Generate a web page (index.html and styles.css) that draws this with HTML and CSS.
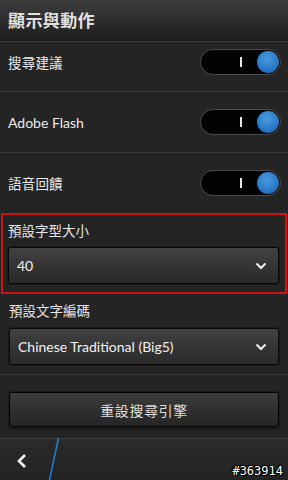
FILE: index.html
```html
<!DOCTYPE html>
<html lang="zh-Hant">
<head>
<meta charset="utf-8">
<link rel="stylesheet" href="styles.css">
</head>
<body>
<div class="screen">
  <header class="titlebar">顯示與動作</header>
  <main class="list">
    <div class="row row-first">
      <span class="label cjk">搜尋建議</span>
      <span class="toggle"><span class="toggle-mark"></span><span class="toggle-knob"></span></span>
    </div>
    <div class="row">
      <span class="label latin">Adobe Flash</span>
      <span class="toggle"><span class="toggle-mark"></span><span class="toggle-knob"></span></span>
    </div>
    <div class="row row-last">
      <span class="label cjk">語音回饋</span>
      <span class="toggle"><span class="toggle-mark"></span><span class="toggle-knob"></span></span>
    </div>
    <section class="field field-highlight">
      <div class="field-label cjk">預設字型大小</div>
      <div class="select">
        <span class="select-value">40</span>
        <svg class="chevron" width="12" height="8" viewBox="0 0 12 8"><path d="M1.5 1.5 L6 6 L10.5 1.5" fill="none" stroke="#f0f0f0" stroke-width="2"/></svg>
      </div>
    </section>
    <section class="field field-sep">
      <div class="field-label cjk">預設文字編碼</div>
      <div class="select">
        <span class="select-value">Chinese Traditional (Big5)</span>
        <svg class="chevron" width="12" height="8" viewBox="0 0 12 8"><path d="M1.5 1.5 L6 6 L10.5 1.5" fill="none" stroke="#f0f0f0" stroke-width="2"/></svg>
      </div>
    </section>
    <section class="action">
      <div class="button">重設搜尋引擎</div>
    </section>
  </main>
  <footer class="actionbar">
    <span class="back">
      <svg width="12" height="16" viewBox="0 0 12 16"><path d="M9 2 L3 8 L9 14" fill="none" stroke="#f4f4f4" stroke-width="2.6"/></svg>
    </span>
    <svg class="divider" width="12" height="42" viewBox="0 0 12 42"><path d="M10.5 0 L1.5 42" stroke="#1e7fd0" stroke-width="1.6"/></svg>
    <span class="tag">#363914</span>
  </footer>
</div>
</body>
</html>
```
FILE: styles.css
```css
* { box-sizing: border-box; }
html, body { margin: 0; padding: 0; background: #242424; }
.screen {
  width: 288px;
  height: 480px;
  display: flex;
  flex-direction: column;
  background: #242424;
  position: relative;
  overflow: hidden;
  font-family: "Lato", "Noto Sans CJK TC", sans-serif;
  color: #ececec;
}
.titlebar {
  height: 42px;
  flex: none;
  padding: 0 8px 2px;
  display: flex;
  align-items: center;
  background: linear-gradient(#3d3d3d, #2a2a2a 60%, #1c1c1c);
  border-bottom: 1px solid #3e3e3e;
  font-family: "Noto Sans CJK TC", sans-serif;
  font-weight: 700;
  font-size: 17px;
  letter-spacing: 0.4px;
  color: #e2e2e2;
}
.list { flex: 1; display: flex; flex-direction: column; }
.row {
  height: 61px;
  flex: none;
  display: flex;
  align-items: center;
  justify-content: space-between;
  padding: 0 7px 0 8px;
  border-bottom: 1px solid #3a3a3a;
}
.row-first { height: 50px; padding-bottom: 9px; }
.row-last { height: 60px; border-bottom: none; }
.cjk { font-family: "Noto Sans CJK TC", sans-serif; }
.label { font-size: 14px; color: #eaeaea; }
.label.cjk { font-size: 13.5px; letter-spacing: 0.2px; }
.latin { font-family: "Lato", sans-serif; font-size: 14px; }
.toggle {
  width: 81px;
  height: 26px;
  border-radius: 13px;
  background: #020202;
  border: 1px solid #4c4c4c;
  display: flex;
  align-items: center;
  justify-content: flex-end;
  position: relative;
  padding-right: 1px;
}
.toggle-mark {
  position: absolute;
  left: 39px;
  top: 7px;
  width: 2px;
  height: 10px;
  background: #e8e8e8;
}
.toggle-knob {
  width: 22px;
  height: 22px;
  border-radius: 50%;
  background: radial-gradient(circle at 45% 35%, #4a9be0, #2878c8 60%, #1a5fa8);
}
.field {
  flex: none;
  display: flex;
  flex-direction: column;
  padding: 0 8px;
}
.field-highlight {
  margin: 0 1px;
  border: 2px solid #cc1418;
  padding: 5px 6px 8px 5px;
  gap: 7px;
}
.field-sep {
  padding: 6px 9px 9px 9px;
  gap: 8px;
  border-bottom: 1px solid #3a3a3a;
}
.field-label { height: 20px; line-height: 20px; font-size: 13.5px; color: #e6e6e6; }
.select {
  height: 37px;
  border: 1px solid #080808;
  border-radius: 3px;
  background: linear-gradient(#424242, #333333 55%, #2a2a2a);
  box-shadow: 0 0 0 1px #1a1a1a;
  display: flex;
  align-items: center;
  justify-content: space-between;
  padding: 0 11px 0 8px;
  font-family: "Lato", sans-serif;
  font-size: 14px;
  color: #f2f2f2;
}
.chevron { display: block; }
.action {
  flex: 1;
  padding: 17px 9px 11px;
  display: flex;
  flex-direction: column;
}
.button {
  height: 35px;
  border: 1px solid #050505;
  border-radius: 3px;
  background: linear-gradient(#3c3c3c, #2e2e2e 55%, #262626);
  box-shadow: 0 0 0 1px #1a1a1a, 0 2px 2px #151515;
  display: flex;
  align-items: center;
  justify-content: center;
  font-family: "Noto Sans CJK TC", sans-serif;
  font-size: 14px;
  letter-spacing: 0.6px;
  color: #dedede;
}
.actionbar {
  height: 42px;
  flex: none;
  display: flex;
  align-items: stretch;
  border-top: 1px solid #3a3a3a;
  background: linear-gradient(#2a2a2a, #232323);
  position: relative;
}
.back {
  width: 48px;
  display: flex;
  align-items: center;
  padding-left: 16px;
  padding-top: 2px;
}
.divider { display: block; margin-top: -1px; }
.tag {
  position: absolute;
  right: 5px;
  bottom: 2px;
  font-family: "DejaVu Sans Mono", monospace;
  font-size: 12px;
  color: #fff;
  text-shadow: -1px 0 #000, 1px 0 #000, 0 -1px #000, 0 1px #000, 1px 1px #000, -1px -1px #000;
}
```
